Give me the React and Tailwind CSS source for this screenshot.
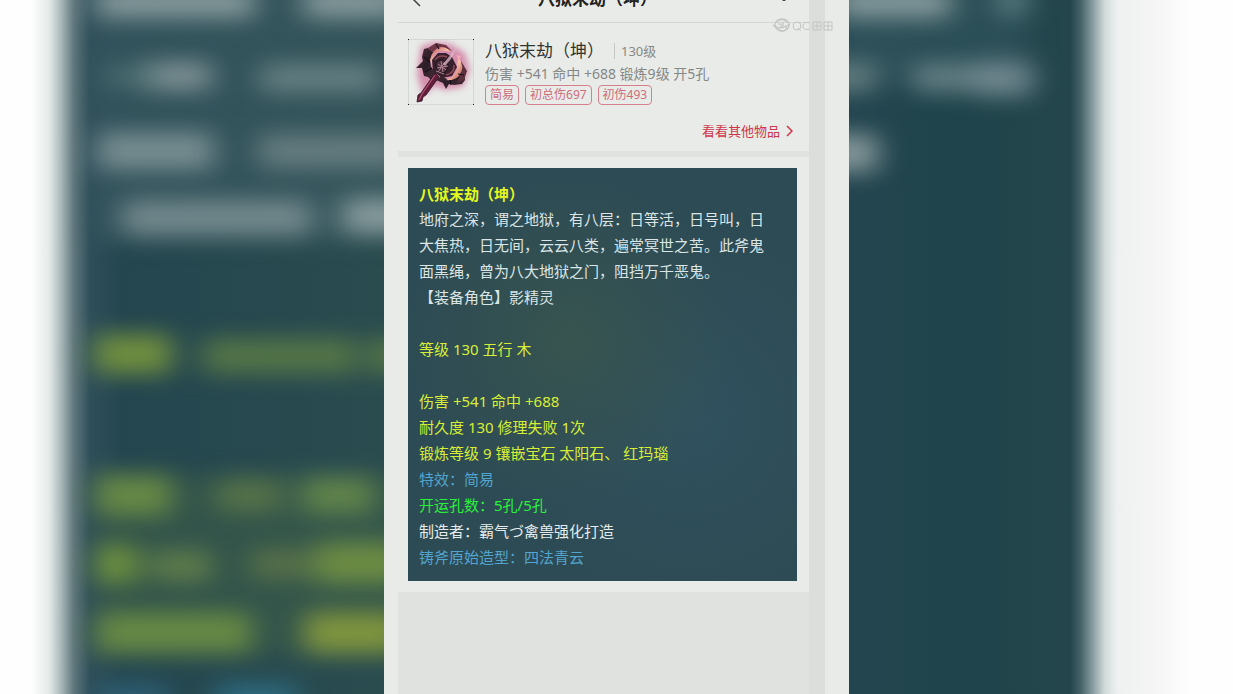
import React from "react";

const haze = [
  // x, y, width, height, colour
  [95, -14, 160, 32, "#93a5a6"], [303, -14, 100, 32, "#93a5a6"], [835, -14, 116, 32, "#93a5a6"], [998, -10, 30, 24, "#6a8d92"],
  [140, 62, 72, 28, "#8b9c9e"], [104, 66, 50, 20, "#4f7274"], [260, 64, 120, 28, "#6f888b"], [820, 62, 57, 30, "#6a8386"], [912, 64, 75, 28, "#6d878c"], [975, 62, 58, 34, "#7c9098"],
  [96, 132, 118, 38, "#81969a"], [258, 134, 150, 34, "#6d8386"], [820, 134, 58, 38, "#93a3a4"],
  [122, 200, 190, 36, "#7d9295"], [342, 198, 90, 36, "#93a5a6"],
  [94, 334, 78, 40, "#7c9a3c"], [202, 338, 155, 36, "#5b7c46"], [368, 338, 40, 36, "#5b7c46"],
  [94, 474, 78, 42, "#6f9245"], [216, 478, 66, 34, "#5b7848"], [302, 476, 72, 38, "#668a4a"],
  [94, 544, 44, 40, "#75993e"], [150, 550, 62, 32, "#64824a"], [250, 548, 65, 32, "#5b7548"], [316, 542, 90, 42, "#759642"],
  [94, 612, 158, 42, "#6f9244"], [304, 612, 100, 42, "#8aa03c"],
  [98, 684, 70, 34, "#30637a"], [215, 684, 82, 34, "#2f7189"],
];

function Backdrop() {
  return (
    <svg aria-hidden="true" className="absolute inset-0 h-full w-full" viewBox="0 0 1233 694" preserveAspectRatio="xMidYMid slice">
      <defs>
        <linearGradient id="edges" gradientUnits="userSpaceOnUse" x1="0" y1="0" x2="1233" y2="0">
          <stop offset="0" stopColor="#fefefe" />
          <stop offset="0.025" stopColor="#fefefe" />
          <stop offset="0.04" stopColor="#e4e9e7" />
          <stop offset="0.05" stopColor="#a6b5b7" />
          <stop offset="0.06" stopColor="#60777d" />
          <stop offset="0.073" stopColor="#2f4f5a" />
          <stop offset="0.1" stopColor="#24464f" />
          <stop offset="0.3" stopColor="#2a4c4f" />
          <stop offset="0.7" stopColor="#23454f" />
          <stop offset="0.78" stopColor="#1f444b" />
          <stop offset="0.868" stopColor="#24454c" />
          <stop offset="0.876" stopColor="#436066" />
          <stop offset="0.886" stopColor="#869b9f" />
          <stop offset="0.896" stopColor="#d1d9d9" />
          <stop offset="0.906" stopColor="#eff1f1" />
          <stop offset="0.935" stopColor="#f3f4f3" />
          <stop offset="0.965" stopColor="#fdfefd" />
          <stop offset="1" stopColor="#fefefe" />
        </linearGradient>
        <filter id="soft" filterUnits="userSpaceOnUse" x="0" y="-60" width="1233" height="820" colorInterpolationFilters="sRGB">
          <feGaussianBlur stdDeviation="14 11" />
        </filter>
      </defs>
      <rect width="1233" height="694" fill="url(#edges)" />
      <g filter="url(#soft)">
        <rect x="95" y="-20" width="310" height="260" fill="#3b5a62" opacity="0.6" />
        <rect x="835" y="-20" width="193" height="100" fill="#34575f" opacity="0.6" />
        <rect x="95" y="475" width="310" height="180" fill="#3a5c48" opacity="0.6" />
        {haze.map(([x, y, w, h, fill]) => (
          <rect key={`${x}-${y}`} x={x} y={y} width={w} height={h} rx="6" fill={fill} opacity="0.86" />
        ))}
      </g>
    </svg>
  );
}

function AxeIcon() {
  return (
    <svg role="img" aria-label="八狱末劫（坤）" viewBox="0 0 66 66" className="size-[66px] shrink-0">
      <defs>
        <filter id="glow" x="-30%" y="-30%" width="160%" height="160%" colorInterpolationFilters="sRGB"><feGaussianBlur stdDeviation="3" /></filter>
        <filter id="melt" x="-10%" y="-10%" width="120%" height="120%" colorInterpolationFilters="sRGB"><feGaussianBlur stdDeviation="0.5" /></filter>
        <linearGradient id="blade" x1="0" y1="0" x2="1" y2="1">
          <stop offset="0" stopColor="#54303a" /><stop offset="0.5" stopColor="#2c1e26" /><stop offset="1" stopColor="#4a2f3a" />
        </linearGradient>
        <linearGradient id="flame" x1="0" y1="0" x2="1" y2="1">
          <stop offset="0" stopColor="#b9475c" /><stop offset="0.5" stopColor="#f6c3a6" /><stop offset="1" stopColor="#b74b55" />
        </linearGradient>
      </defs>
      <rect x="0.5" y="0.5" width="65" height="65" fill="none" stroke="#d5d9d6" strokeWidth="1" />
      <path d="M0 .5h1M65 .5h1M0 65.500h1M65 65.500h1" stroke="#222" strokeWidth="1" />
      <path filter="url(#glow)" d="M13 7 27 3 43 5 57 14 62 31 55 48 37 51 26 47 15 57 9 36 11 20Z" fill="#d07a9f" opacity="0.8" />
      <g filter="url(#melt)">
        <path d="M16 10 14 18 15 22 8 29 14 29 16 37 20 38 24 42 28 34 23 28 22 21 26 14 20 9Z" fill="url(#blade)" />
        <path d="M20 9 28 4 38 6 44 12 35 9 26 14Z" fill="#6e3644" />
        <path d="M51 34 56 31 57 41 54 45 46 46 41 45 38 50 35 44 28 41 33 37 41 41Z" fill="url(#blade)" />
        <path d="M53 22 59 32 56 41 49 44 53 34Z" fill="#5b303c" />
        <path d="M22 21Q24 10 33 8Q39 8 43 13Q35 10 29 13Q25 16 24 25Z" fill="url(#flame)" />
        <path d="M50 18Q58 28 51 37Q46 42 38 41Q47 38 49 30Z" fill="url(#flame)" />
        <path d="M24 21 30 14 38 14 44 18 49 28 44 37 34 39 25 32Z" fill="#38202c" />
        <path d="M27 21Q31 15 39 18M46 26Q47 34 38 36" fill="none" stroke="#8d4a58" strokeWidth="1.5" />
        <path d="M28 23Q35 18 40 26Q40 33 34 34Q27 31 28 23Z" fill="#4e2e3c" stroke="#1b151d" />
        <path d="M30 25 38 31M37 23 30 33M33 22 35 33M29 29 40 27M28 32 36 35" stroke="#ad8490" strokeWidth="1" />
        <path d="M35 25 49 8 43 20 37 27Z" fill="#dfbccb" opacity="0.75" />
        <path d="M48 16 53 17 51 21Z" fill="#f3a8ba" />
        <path d="M27 34 31 38 18 56 15 58 14 62 9 63 10 56 13 54Z" fill="#621e38" stroke="#32152a" strokeWidth="0.8" />
        <path d="M27 36 14 55 11 61" fill="none" stroke="#b75877" strokeWidth="1.1" />
        <path d="M16 18 22 23M17 33 24 29M28 5 31 10M43 46 42 41M56 36 50 35" stroke="#17121a" strokeWidth="1.2" />
      </g>
    </svg>
  );
}

function Watermark() {
  return (
    <svg role="img" aria-label="QC" viewBox="0 0 62 18" className="absolute right-[15px] top-4 h-[18px] w-[62px]" fill="none" stroke="#c3c6c4">
      <ellipse cx="10" cy="9" rx="7" ry="6" strokeWidth="1.3" />
      <path d="M4 6Q10 1 15 6M1 9Q7 15 18 8M6 13Q11 18 15 12M6 8h3v4M11 6v5h4" strokeWidth="1.2" />
      <circle cx="25" cy="10" r="4" />
      <path d="m26 12 3 3M38 7q-7-2-7 3t7 3M41 6h8v8h-8zM42 10h7M45 6v8M52 6h8v8h-8zM52 10h8M56 5v10" />
    </svg>
  );
}

const tags = ["简易", "初总伤697", "初伤493"];

const attributes = [
  ["等级 130 五行 木", "text-[#d8ee36]"],
  ["", ""],
  ["伤害 +541 命中 +688", "text-[#d8ee36]"],
  ["耐久度 130 修理失败 1次", "text-[#d8ee36]"],
  ["锻炼等级 9 镶嵌宝石 太阳石、 红玛瑙", "text-[#d8ee36]"],
  ["特效：简易", "text-[#52a5cf]"],
  ["开运孔数：5孔/5孔", "text-[#2bf03c]"],
  ["制造者：霸气づ禽兽强化打造", "text-[#e4ebea]"],
  ["铸斧原始造型：四法青云", "text-[#52a5cf]"],
];

export default function App() {
  return (
    <div className="relative flex h-screen justify-center overflow-hidden bg-[#fefefe] font-['Noto_Sans','Noto_Sans_CJK_SC',sans-serif]" lang="zh-CN">
      <Backdrop />
      <main className="relative flex w-full max-w-[465px] bg-[#e8ebe8] pl-[14px] pr-6">
        <div className="flex min-w-0 flex-1 flex-col">
          <header className="-mt-6 flex h-[47px] shrink-0 items-center justify-between border-b border-[#d3d6d4] px-3">
            <button type="button" aria-label="返回" className="text-[#444]">
              <svg viewBox="0 0 12 20" className="h-5 w-3" fill="none" stroke="currentColor" strokeWidth="1.5"><path d="m10 1-8 8 8 8" /></svg>
            </button>
            <h1 className="text-[17px] font-bold leading-6 text-[#222]">八狱末劫（坤）</h1>
            <button type="button" aria-label="更多" className="text-[#333]">
              <svg viewBox="0 0 24 20" className="h-5 w-6" fill="currentColor"><circle cx="11" cy="10" r="2" /></svg>
            </button>
          </header>
          <section className="flex flex-col px-[10px] pt-4">
            <div className="flex gap-[11px]">
              <AxeIcon />
              <div className="min-w-0">
                <div className="flex h-6 items-center">
                  <h2 className="text-[17px] leading-6 text-[#333]">八狱末劫（坤）</h2>
                  <span className="ml-[10px] border-l border-[#c5c8c6] pl-[6px] text-[13px] leading-4 text-[#858887]">130级</span>
                </div>
                <p className="text-sm leading-[22px] text-[#858887]">伤害 +541 命中 +688 锻炼9级 开5孔</p>
                <ul className="flex gap-[6px]">
                  {tags.map((t) => <li key={t} className="rounded border border-[#d5808b] px-1 text-xs leading-[18px] text-[#cf6d7c]">{t}</li>)}
                </ul>
              </div>
            </div>
            <a href="#items" className="mt-4 flex items-center gap-[6px] self-end pr-[6px] text-[13px] leading-5 text-[#d0364a]">
              看看其他物品
              <svg aria-hidden="true" viewBox="0 0 7 12" className="h-3 w-[7px]" fill="none" stroke="currentColor" strokeWidth="1.5"><path d="m1 1 5 5-5 5" /></svg>
            </a>
          </section>
          <div className="mt-[10px] h-[6px] shrink-0 bg-[#dfe2df]" />
          <section className="py-[11px] pl-[10px] pr-3">
            <div className="bg-[#2d4b54] bg-[radial-gradient(circle_at_42%_42%,#37544f_0%,transparent_50%),radial-gradient(circle_at_72%_60%,#30515f_0%,transparent_50%)] px-[11px] pb-[11px] pt-[14px] text-[15px] leading-[26px]">
              <h3 className="font-bold leading-6 text-[#e4f820]">八狱末劫（坤）</h3>
              <p className="text-[#dbe5e6]">
                地府之深，谓之地狱，有八层：日等活，日号叫，日<br />
                大焦热，日无间，云云八类，遍常冥世之苦。此斧鬼<br />
                面黑绳，曾为八大地狱之门，阻挡万千恶鬼。<br />
                【装备角色】影精灵
              </p>
              <div className="pt-[26px]">
                {attributes.map(([t, c], i) => <p key={i} className={`min-h-[26px] ${c}`}>{t}</p>)}
              </div>
            </div>
          </section>
          <div className="flex-1 bg-[#e0e2df]" />
        </div>
        <div className="w-4 shrink-0 bg-[#dcdedc]" />
        <Watermark />
      </main>
    </div>
  );
}
